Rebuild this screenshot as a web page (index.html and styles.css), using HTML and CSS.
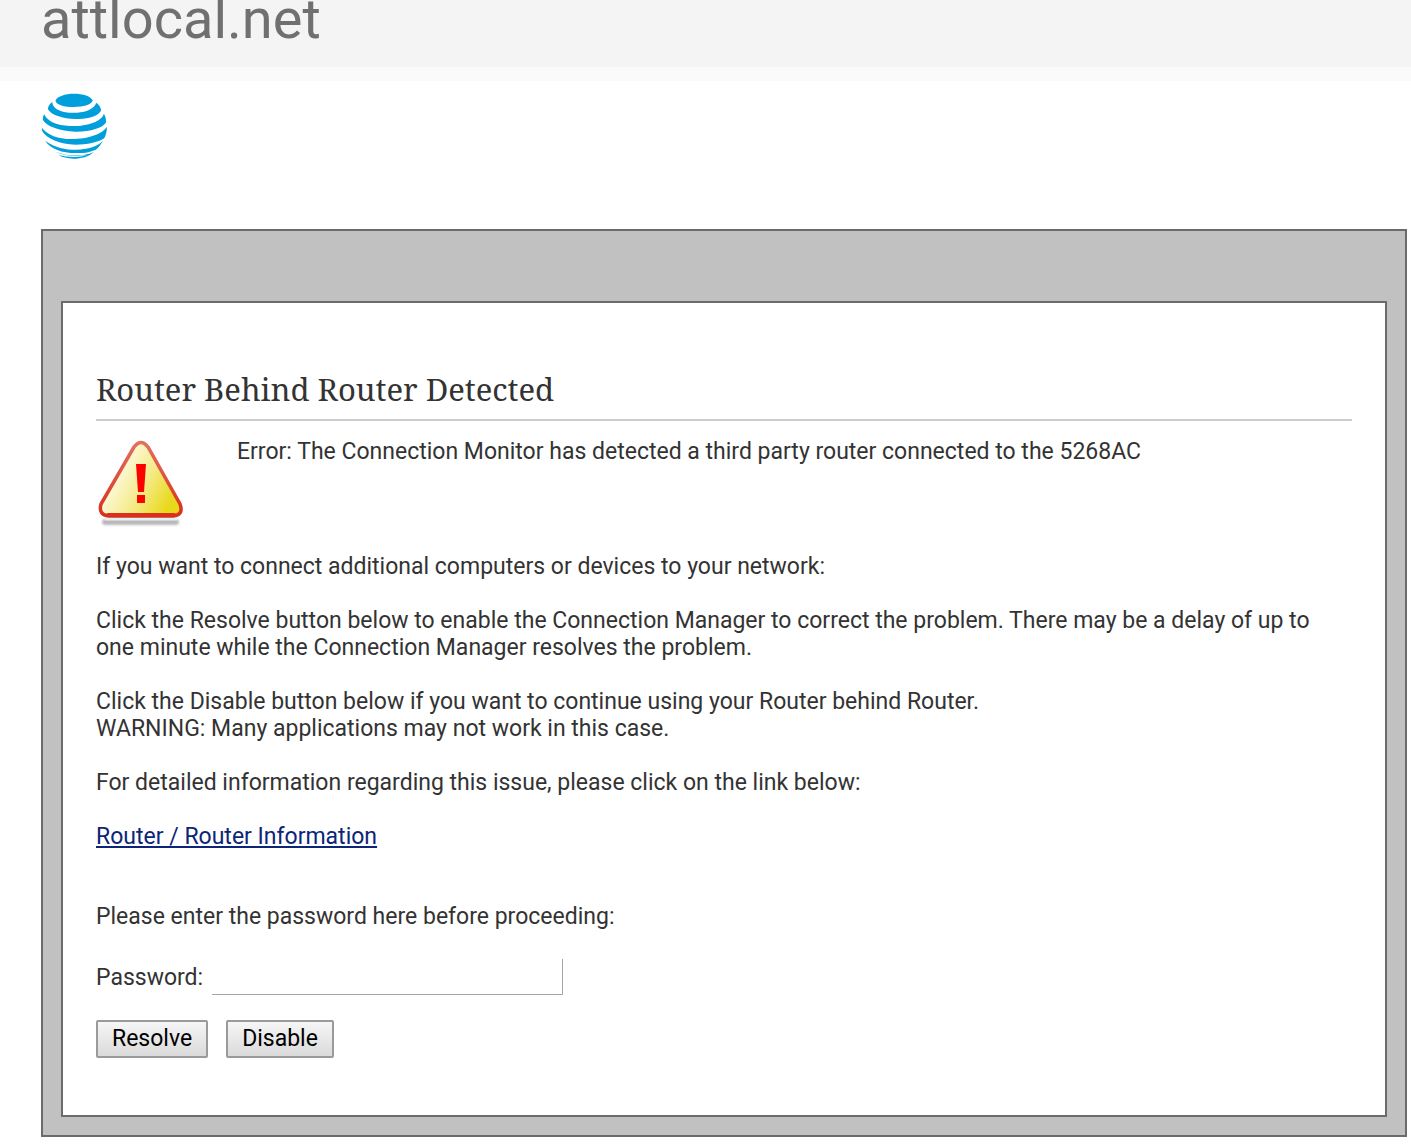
FILE: index.html
```html
<!DOCTYPE html>
<html lang="en">
<head>
<meta charset="utf-8">
<meta name="viewport" content="width=device-width, initial-scale=1">
<title>Router Behind Router Detected</title>
<link rel="stylesheet" href="styles.css">
</head>
<body>
<header class="site-bar">attlocal.net</header>
<div class="brand">
  <svg class="logo" viewBox="35 24 198 198" role="img" aria-label="AT&amp;T">
    <g fill="#009fdb">
      <path d="M77 47C80 34 107 26 132 26C160 26 184 34 188 46C188 59 160 66 132 66C104 66 79 59 77 47Z"/>
      <path d="M67 51C69 78 109 86 142 83C172 81 195 69 199 53C207 58 213 67 214 76C208 93 175 104 138 102C98 102 62 89 54 72C55 64 60 56 67 51Z"/>
      <path d="M43 88C52 110 83 122 119 123C169 125 216 110 222 86C227 94 229 103 229 112C219 130 178 141 136 140C92 139 50 124 39 105C39 98 40 93 43 88Z"/>
      <path d="M36 128C52 150 86 162 124 162C176 162 219 146 231 125C232 137 228 152 223 160C204 172 172 179 137 179C91 178 49 161 37 138Z"/>
      <path d="M46 167C77 189 105 194 139 194C174 193 205 184 219 167C213 179 206 187 198 194C178 203 158 205 136 204C98 204 62 192 46 167Z"/>
      <path d="M76 200C99 209 118 211 137 211C161 211 178 208 193 200C177 215 154 221 132 221C114 220 96 217 86 210C113 217 149 218 174 210C145 214 105 214 76 200Z"/>
    </g>
  </svg>
</div>
<div class="frame">
  <main class="panel">
    <h1 class="title">Router Behind Router Detected</h1>
    <div class="alert">
      <svg class="alert-icon" viewBox="0 1 90 90" role="img" aria-label="Warning">
        <defs>
          <linearGradient id="face" x1="0" y1="0.3" x2="1" y2="0.8">
            <stop offset="0.2" stop-color="#fdf9dc"/>
            <stop offset="0.55" stop-color="#f4eb88"/>
            <stop offset="0.9" stop-color="#e9d91c"/>
          </linearGradient>
          <linearGradient id="edge" x1="0" y1="0" x2="0" y2="1">
            <stop offset="0" stop-color="#e2705f"/>
            <stop offset="1" stop-color="#d92f1c"/>
          </linearGradient>
          <filter id="soft" filterUnits="userSpaceOnUse" x="0" y="74" width="90" height="17"><feGaussianBlur stdDeviation="1.2"/></filter>
        </defs>
        <rect x="6" y="82" width="77" height="6" rx="3" fill="#b9b9bb" filter="url(#soft)"/>
        <path d="M10 82H80" stroke="#e3f0f1" stroke-width="3" stroke-linecap="round"/>
        <path d="M38 10Q45 1 52 10L84 67Q88 78 77 79H13Q2 78 5 67Z" fill="url(#face)" stroke="url(#edge)" stroke-width="3.5"/>
        <path d="M12 78H78" stroke="#d92f1c" stroke-width="4" stroke-linecap="round"/>
        <path d="M40 27H50L48 55H42ZM41 58H49V66H41Z" fill="#f00"/>
      </svg>
      <p class="alert-text">Error: The Connection Monitor has detected a third party router connected to the 5268AC</p>
    </div>
    <div class="copy">
      <p>If you want to connect additional computers or devices to your network:</p>
      <p>Click the Resolve button below to enable the Connection Manager to correct the problem. There may be a delay of up to one minute while the Connection Manager resolves the problem.</p>
      <p>Click the Disable button below if you want to continue using your Router behind Router.<br>WARNING: Many applications may not work in this case.</p>
      <p>For detailed information regarding this issue, please click on the link below:</p>
      <p><a class="info-link" href="#">Router / Router Information</a></p>
    </div>
    <form class="login">
      <p>Please enter the password here before proceeding:</p>
      <div class="field">
        <label for="password">Password:</label>
        <input class="password" id="password" type="password">
      </div>
      <div class="actions">
        <button class="button" type="button">Resolve</button>
        <button class="button" type="button">Disable</button>
      </div>
    </form>
  </main>
</div>
</body>
</html>
```
FILE: styles.css
```css
* {
  box-sizing: border-box;
}

body {
  margin: 0;
  background: #fff;
  color: #333;
  font-family: Roboto, "Liberation Sans", sans-serif;
  font-size: 23px;
  line-height: 27px;
}

p {
  margin: 0;
}

.site-bar {
  padding: 0 41px 29px;
  border-bottom: 14px solid #fafafa;
  background: #f4f4f4;
  color: #707070;
  font-size: 56px;
  line-height: 38px;
}

.brand {
  padding: 12px 41px 70px;
}

.logo {
  display: block;
  width: 67px;
  height: 66px;
}

.frame {
  margin: 0 4px 10px 41px;
  padding: 70px 18px 18px;
  border: 2px solid #6b6b6b;
  background: #c1c1c1;
}

.panel {
  padding: 68px 33px 57px;
  border: 2px solid #6b6b6b;
  background: #fff;
}

.title {
  margin: 0 0 17px;
  padding-bottom: 12px;
  border-bottom: 2px solid #ccc;
  font-family: "Noto Serif", "Liberation Serif", serif;
  font-size: 31px;
  font-weight: 400;
  line-height: 36px;
}

.alert {
  display: flex;
  gap: 51px;
  margin-bottom: 25px;
}

.alert-icon {
  flex: none;
  width: 90px;
  height: 90px;
}

.copy {
  display: grid;
  gap: 27px;
  margin-bottom: 53px;
}

.info-link {
  color: #0c2577;
}

.field {
  display: flex;
  align-items: center;
  gap: 9px;
  margin: 29px 0 25px;
}

.password {
  width: 351px;
  max-width: 100%;
  height: 36px;
  padding: 0 6px;
  border: 0 solid #a5a5a5;
  border-width: 0 1px 1px 0;
  outline: 0;
  background: #fff;
  font: inherit;
}

.actions {
  display: flex;
  gap: 18px;
}

.button {
  height: 38px;
  padding: 0 14px 2px;
  border: 2px solid #9a9a9a;
  border-radius: 2px;
  background: linear-gradient(#f6f6f6, #dadada);
  color: #000;
  font: inherit;
}
```
